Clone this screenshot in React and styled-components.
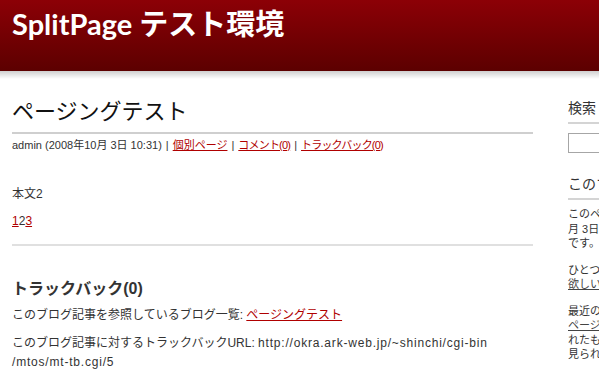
import styled, { createGlobalStyle } from "styled-components";

const GlobalStyle = createGlobalStyle`
  html, body {
    margin: 0;
    padding: 0;
    overflow: hidden;
    background: #fff;
  }
  body {
    font-family: "Liberation Sans", "Noto Sans CJK JP", sans-serif;
    color: #333;
  }
`;

const Page = styled.div`
  width: 599px;
  overflow: hidden;
`;

const Header = styled.div`
  height: 71px;
  background: linear-gradient(to bottom, #8c0006 0%, #5c0000 100%);
  padding: 0 12px;
  box-sizing: border-box;
`;

const SiteTitle = styled.h1`
  margin: 0;
  padding-top: 6px;
  font-family: Lato, "Noto Sans CJK JP", sans-serif;
  font-weight: 700;
  font-size: 29px;
  line-height: 36px;
  color: #fff;
`;

const HeaderShadow = styled.div`
  height: 8px;
  background: linear-gradient(to bottom, #cfcfcf, #fff);
`;

const Body = styled.div`
  display: flex;
  gap: 35px;
  padding-left: 12px;
  width: 800px;
`;

const Main = styled.div`
  width: 521px;
  flex: none;
`;

const EntryTitle = styled.h2`
  margin: 20px 0 0;
  padding-bottom: 7px;
  font-weight: 400;
  font-size: 22px;
  line-height: 26px;
  color: #111;
  border-bottom: 2px solid #cfcfcf;
`;

const Meta = styled.div`
  margin-top: 4px;
  font-size: 11px;
  line-height: 14px;
  color: #333;
`;

const Sep = styled.span`
  margin: 0 4px;
`;

const Link = styled.a`
  color: #b00000;
  text-decoration: underline;
  letter-spacing: ${(p) => (p.$tight ? "-0.8px" : "normal")};
`;

const Para = styled.p`
  margin: ${(p) => p.$mt || 0}px 0 0;
  font-size: 12px;
  line-height: 19px;
  color: #333;
  white-space: nowrap;
`;

const Url = styled.span`
  letter-spacing: 0.8px;
`;

const Rule = styled.div`
  margin-top: 13px;
  border-top: 2px solid #e0e0e0;
`;

const Heading = styled.h3`
  margin: 32px 0 0;
  font-size: 16px;
  line-height: 22px;
  font-weight: 700;
  color: #333;
`;

const Sidebar = styled.div`
  width: 220px;
  flex: none;
`;

const SideHeading = styled.div`
  margin-top: ${(p) => p.$mt}px;
  padding-bottom: 5px;
  font-size: 14px;
  line-height: 18px;
  color: #333;
  border-bottom: 2px solid #d4d4d4;
`;

const SearchInput = styled.input`
  display: block;
  margin-top: 9px;
  width: 200px;
  height: 20px;
  box-sizing: border-box;
  border: 1px solid #a6a6a6;
`;

const SideText = styled.p`
  margin: ${(p) => p.$mt}px 0 0;
  font-size: 11px;
  line-height: 14.5px;
  color: #333;
  white-space: nowrap;
`;

const SideLink = styled.a`
  color: #444;
  text-decoration: underline;
`;

export default function App() {
  return (
    <Page>
      <GlobalStyle />
      <Header>
        <SiteTitle>SplitPage テスト環境</SiteTitle>
      </Header>
      <HeaderShadow />
      <Body>
        <Main>
          <EntryTitle>ページングテスト</EntryTitle>
          <Meta>
            admin (2008年10月 3日 10:31)<Sep>|</Sep>
            <Link href="#">個別ページ</Link>
            <Sep>|</Sep>
            <Link href="#" $tight>コメント(0)</Link>
            <Sep>|</Sep>
            <Link href="#" $tight>トラックバック(0)</Link>
          </Meta>
          <Para $mt={33}>本文2</Para>
          <Para $mt={8}>
            <Link href="#">1</Link>2<Link href="#">3</Link>
          </Para>
          <Rule />
          <Heading>トラックバック(0)</Heading>
          <Para $mt={6}>
            このブログ記事を参照しているブログ一覧: <Link href="#">ページングテスト</Link>
          </Para>
          <Para $mt={9}>
            このブログ記事に対するトラックバックURL: <Url>http://okra.ark-web.jp/~shinchi/cgi-bin</Url>
            <br />
            <Url>/mtos/mt-tb.cgi/5</Url>
          </Para>
        </Main>
        <Sidebar>
          <SideHeading $mt={20}>検索</SideHeading>
          <SearchInput type="text" />
          <SideHeading $mt={22}>このブログ記事について</SideHeading>
          <SideText $mt={7}>
            このページは、adminが2008年10
            <br />
            月 3日 10:31に書いたブログ記事
            <br />
            です。
          </SideText>
          <SideText $mt={12}>
            ひとつ前のブログ記事は「ページ
            <br />
            <SideLink href="#">欲しいもの</SideLink>」です。
          </SideText>
          <SideText $mt={12}>
            最近のコンテンツはインデックス
            <br />
            <SideLink href="#">ページ</SideLink>で見られます。過去に書か
            <br />
            れたものはアーカイブのページで
            <br />
            見られます。
          </SideText>
        </Sidebar>
      </Body>
    </Page>
  );
}
